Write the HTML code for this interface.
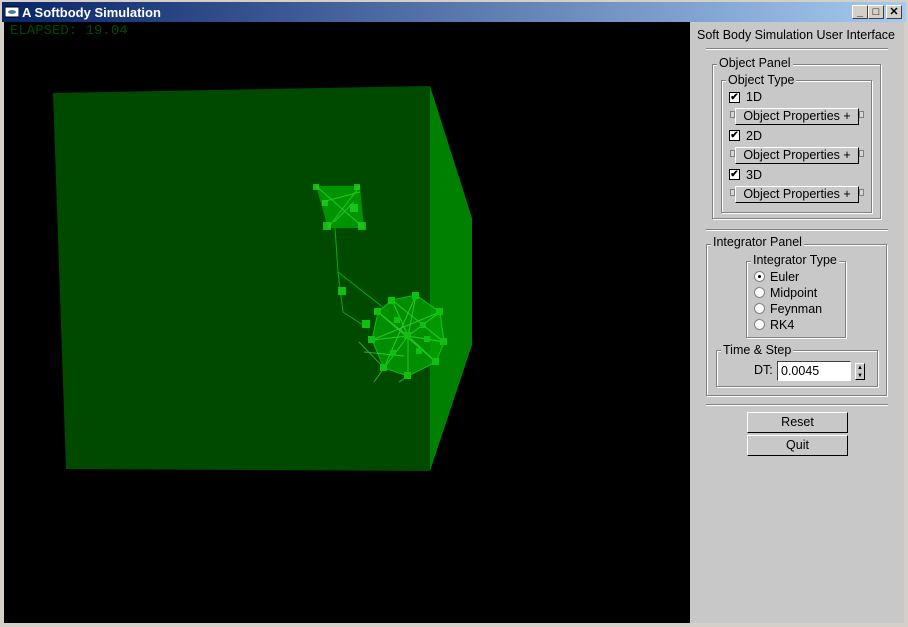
<!DOCTYPE html>
<html><head><meta charset="utf-8"><style>
*{box-sizing:border-box;margin:0;padding:0}
body{width:908px;height:627px;background:#d4d0c8;position:relative;overflow:hidden;font-family:"Liberation Sans",sans-serif;font-size:12.5px;color:#000}
.a{position:absolute}
#title{left:0;top:0;width:908px;height:22px;background:linear-gradient(90deg,#0a246a,#a6caf0);border:2px solid #d4d0c8;border-bottom:0}
#title span{position:absolute;left:20px;top:3px;color:#fff;font-weight:bold;font-size:13px}
.wb{top:5px;width:16px;height:14px;background:#d4d0c8;border:1px solid;border-color:#fff #404040 #404040 #fff;font-size:11px;font-weight:bold;text-align:center;line-height:12px}
#canvas{left:4px;top:22px;width:686px;height:601px;background:#000}
#panel{left:690px;top:22px;width:214px;height:601px;background:#c8c8c8}
.hr{height:2px;border-top:1px solid #808080;border-bottom:1px solid #fff}
.box{border:1px solid #808080;box-shadow:1px 1px 0 #fff, inset 1px 1px 0 #fff}
.lg{background:#c8c8c8;padding:0 2px;line-height:13px}
.cb{width:11px;height:11px;background:#fff;border:1px solid #000;font-size:10px;line-height:9px;text-align:center;font-weight:bold}
.btn{background:#c8c8c8;border:1px solid;border-color:#fff #000 #000 #fff;text-align:center;line-height:14px}
.sq{width:5px;height:7px;border:1px solid #808080;background:#d8d8d8}
.rd{width:11px;height:11px;border-radius:50%;background:#fff;border:1px solid #808080}
</style></head><body>
<div id="title" class="a"><svg class="a" style="left:3px;top:4px" width="14" height="12"><rect x="0" y="1" width="14" height="10" fill="#fff" stroke="#000"/><ellipse cx="7" cy="6" rx="4" ry="2" fill="#5080a0"/></svg><span>A Softbody Simulation</span></div>
<div class="a wb" style="left:852px">_</div><div class="a wb" style="left:868px">□</div><div class="a wb" style="left:886px">✕</div>
<div id="canvas" class="a">
<svg width="686" height="601" style="position:absolute;left:0;top:0">
<text x="6" y="12" fill="#004800" font-family="Liberation Mono" font-size="14">ELAPSED: 19.04</text>
<polygon points="49,71 426,64 426,449 62,447" fill="#004a00"/>
<polygon points="426,64 468,196 468,323 426,449" fill="#008000"/>
<polygon points="312,164 356,164 360,206 324,206" fill="#00a000" opacity=".85"/>
<g stroke="#30e030" stroke-width="1" fill="none" opacity=".7"><line x1="312" y1="164" x2="360" y2="206"/><line x1="356" y1="164" x2="324" y2="206"/><line x1="318" y1="180" x2="356" y2="170"/><line x1="330" y1="200" x2="350" y2="180"/></g>
<g fill="#20d020" opacity=".8"><rect x="309" y="162" width="6" height="6"/><rect x="350" y="162" width="6" height="6"/><rect x="346" y="182" width="8" height="8"/><rect x="319" y="200" width="8" height="8"/><rect x="354" y="200" width="8" height="8"/><rect x="318" y="178" width="6" height="6"/></g>
<polyline points="331,206 334,250 339,290 362,305" stroke="#00b000" fill="none"/>
<line x1="334" y1="250" x2="385" y2="290" stroke="#00b000"/>
<polygon points="388,278 412,273 436,290 440,320 432,340 404,354 380,346 368,318 374,290" fill="#00a000" opacity=".8" stroke="#20d020"/>
<g stroke="#40f040" stroke-width="1" opacity=".6">
<line x1="404" y1="314" x2="388" y2="278"/><line x1="404" y1="314" x2="412" y2="273"/><line x1="404" y1="314" x2="436" y2="290"/><line x1="404" y1="314" x2="440" y2="320"/><line x1="404" y1="314" x2="432" y2="340"/><line x1="404" y1="314" x2="404" y2="354"/><line x1="404" y1="314" x2="380" y2="346"/><line x1="404" y1="314" x2="368" y2="318"/><line x1="404" y1="314" x2="374" y2="290"/>
<line x1="374" y1="290" x2="432" y2="340"/><line x1="388" y1="278" x2="440" y2="320"/><line x1="368" y1="318" x2="436" y2="290"/><line x1="380" y1="346" x2="412" y2="273"/><line x1="355" y1="320" x2="380" y2="346"/><line x1="360" y1="330" x2="400" y2="334"/><line x1="380" y1="346" x2="370" y2="360"/><line x1="404" y1="354" x2="395" y2="360"/></g>
<g fill="#10c010"><rect x="334" y="265" width="8" height="8"/><rect x="358" y="298" width="8" height="8"/>
<rect x="384" y="275" width="7" height="7"/><rect x="408" y="270" width="7" height="7"/><rect x="432" y="286" width="7" height="7"/><rect x="436" y="316" width="7" height="7"/><rect x="428" y="336" width="7" height="7"/><rect x="400" y="350" width="7" height="7"/><rect x="376" y="342" width="7" height="7"/><rect x="364" y="314" width="7" height="7"/><rect x="370" y="286" width="7" height="7"/>
<rect x="400" y="310" width="7" height="7"/><rect x="390" y="295" width="6" height="6"/><rect x="416" y="300" width="6" height="6"/><rect x="412" y="326" width="6" height="6"/><rect x="386" y="328" width="6" height="6"/><rect x="420" y="314" width="6" height="6"/></g>
</svg></div>
<div id="panel" class="a">
<div class="a" style="left:7px;top:6px">Soft Body Simulation User Interface</div>
<div class="a hr" style="left:16px;top:26px;width:182px"></div>
<div class="a box" style="left:22px;top:42px;width:169px;height:155px"></div>
<div class="a lg" style="left:27px;top:35px">Object Panel</div>
<div class="a box" style="left:31px;top:58px;width:151px;height:133px"></div>
<div class="a lg" style="left:36px;top:52px">Object Type</div>
<div class="a cb" style="left:39px;top:70px">✔</div><div class="a" style="left:56px;top:68px">1D</div>
<div class="a sq" style="left:40px;top:89px"></div><div class="a btn" style="left:45px;top:86px;width:124px;height:17px">Object Properties +</div><div class="a sq" style="left:169px;top:89px"></div>
<div class="a cb" style="left:39px;top:108px">✔</div><div class="a" style="left:56px;top:107px">2D</div>
<div class="a sq" style="left:40px;top:128px"></div><div class="a btn" style="left:45px;top:125px;width:124px;height:17px">Object Properties +</div><div class="a sq" style="left:169px;top:128px"></div>
<div class="a cb" style="left:39px;top:147px">✔</div><div class="a" style="left:56px;top:146px">3D</div>
<div class="a sq" style="left:40px;top:167px"></div><div class="a btn" style="left:45px;top:164px;width:124px;height:17px">Object Properties +</div><div class="a sq" style="left:169px;top:167px"></div>
<div class="a hr" style="left:16px;top:207px;width:182px"></div>
<div class="a box" style="left:16px;top:222px;width:181px;height:152px"></div>
<div class="a lg" style="left:21px;top:214px">Integrator Panel</div>
<div class="a box" style="left:56px;top:239px;width:100px;height:77px"></div>
<div class="a lg" style="left:61px;top:232px">Integrator Type</div>
<div class="a rd" style="left:64px;top:249px"><div class="a" style="left:3px;top:3px;width:3px;height:3px;background:#000;border-radius:50%"></div></div><div class="a" style="left:80px;top:248px">Euler</div>
<div class="a rd" style="left:64px;top:265px"></div><div class="a" style="left:80px;top:264px">Midpoint</div>
<div class="a rd" style="left:64px;top:281px"></div><div class="a" style="left:80px;top:280px">Feynman</div>
<div class="a rd" style="left:64px;top:297px"></div><div class="a" style="left:80px;top:296px">RK4</div>
<div class="a box" style="left:26px;top:328px;width:162px;height:37px"></div>
<div class="a lg" style="left:31px;top:322px">Time &amp; Step</div>
<div class="a" style="left:64px;top:341px">DT:</div>
<div class="a" style="left:87px;top:339px;width:74px;height:20px;background:#fff;border:1px solid;border-color:#404040 #fff #fff #404040;padding:2px 3px">0.0045</div>
<div class="a btn" style="left:165px;top:341px;width:10px;height:17px;font-size:6px;line-height:8px">▲<br>▼</div>
<div class="a hr" style="left:16px;top:382px;width:182px"></div>
<div class="a btn" style="left:57px;top:390px;width:101px;height:21px;line-height:19px">Reset</div>
<div class="a btn" style="left:57px;top:413px;width:101px;height:21px;line-height:19px">Quit</div>
</div>
</body></html>
